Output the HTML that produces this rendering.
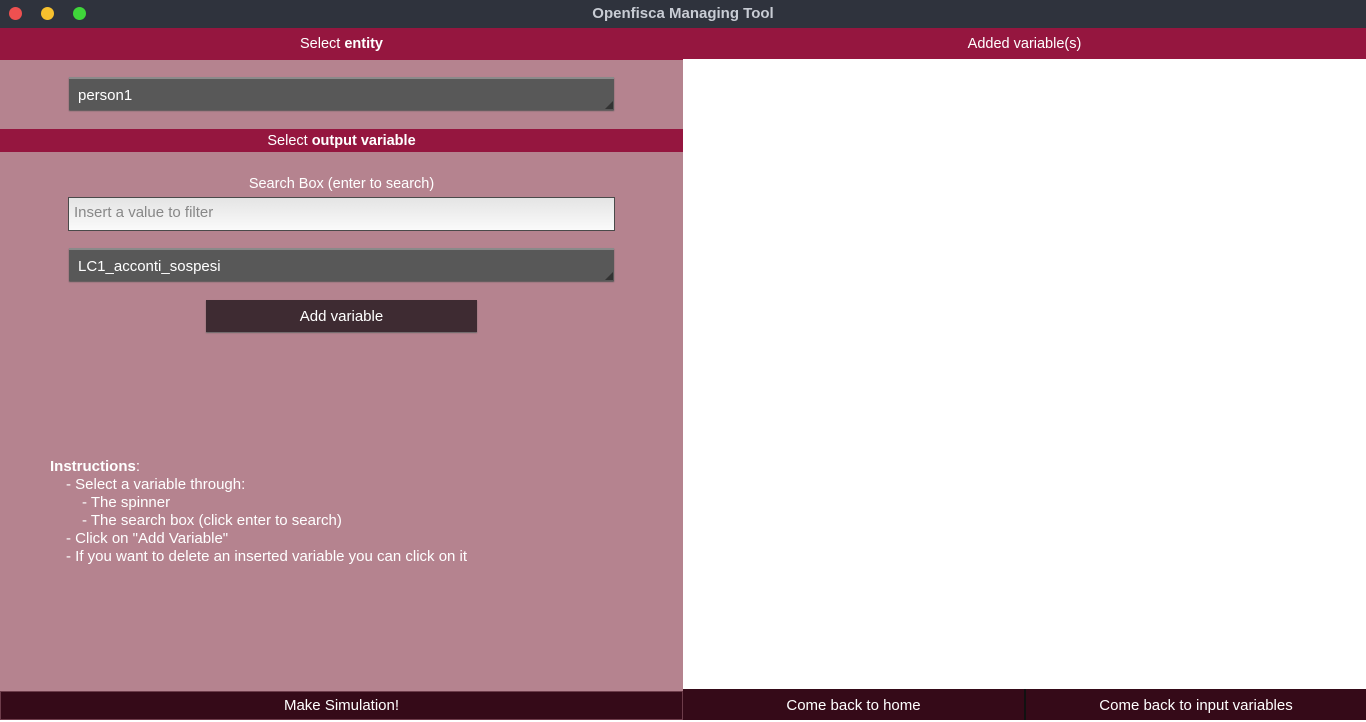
<!DOCTYPE html>
<html><head><style>
*{margin:0;padding:0;box-sizing:border-box}
body{width:1366px;height:720px;overflow:hidden;font-family:"Liberation Sans",sans-serif;font-size:14.5px;color:#fff;background:#fff;position:relative}
.abs{position:absolute}
.title{left:0;top:0;width:1366px;height:28px;background:#2f333d;color:#c8ccd4;font-weight:bold;text-align:center;line-height:28px;font-size:15px}
.dot{width:13px;height:13px;border-radius:50%;top:7px}
.hdr{background:#95163f;text-align:center}
.left{left:0;top:60px;width:683px;height:631px;background:#b5838f}
.combo{left:69px;width:545px;height:33px;background:#585858;border-top:2px solid #8a8a8a;box-shadow:0 1px 1px #555;padding-left:9px;line-height:33px;font-size:15px}
.combo:after{content:"";position:absolute;right:1px;bottom:1px;border-left:8px solid transparent;border-bottom:8px solid #333}
.btn{background:#350a18;text-align:center;line-height:31px;font-size:15px}
</style></head><body>
<div class="abs title">Openfisca Managing Tool</div>
<div class="abs dot" style="left:9px;background:#ee5050"></div>
<div class="abs dot" style="left:41px;background:#f7c12e"></div>
<div class="abs dot" style="left:73px;background:#3fd63a"></div>

<div class="abs hdr" style="left:0;top:28px;width:683px;height:32px;line-height:33px">Select <b>entity</b></div>
<div class="abs hdr" style="left:683px;top:28px;width:683px;height:31px;line-height:32px">Added variable(s)</div>
<div class="abs left"></div>
<div class="abs combo" style="top:77px">person1</div>
<div class="abs hdr" style="left:0;top:129px;width:683px;height:23px;line-height:24px">Select <b>output variable</b></div>
<div class="abs" style="left:0;top:176px;width:683px;text-align:center">Search Box (enter to search)</div>
<div class="abs" style="left:68px;top:197px;width:547px;height:34px;border:1px solid #4a4a4a;background:linear-gradient(#e4e4e4,#fafafa);color:#888;padding-left:5px;line-height:30px;font-size:15px">Insert a value to filter</div>
<div class="abs combo" style="top:248px">LC1_acconti_sospesi</div>
<div class="abs" style="left:206px;top:300px;width:271px;height:32px;background:#3e2b32;text-align:center;line-height:34px;box-shadow:0 1px 1px #666;font-size:15px">Add variable</div>

<div class="abs" style="left:50px;top:458px;line-height:18px;font-size:15px">
<b>Instructions</b>:<br>
<span style="padding-left:16px">- Select a variable through:</span><br>
<span style="padding-left:32px">- The spinner</span><br>
<span style="padding-left:32px">- The search box (click enter to search)</span><br>
<span style="padding-left:16px">- Click on "Add Variable"</span><br>
<span style="padding-left:16px">- If you want to delete an inserted variable you can click on it</span>
</div>

<div class="abs btn" style="left:0;top:691px;width:683px;height:29px;border:1px solid #6d3c4a;line-height:28px">Make Simulation!</div>
<div class="abs btn" style="left:683px;top:689px;width:341px;height:31px;line-height:33px">Come back to home</div>
<div class="abs btn" style="left:1026px;top:689px;width:340px;height:31px;line-height:33px">Come back to input variables</div>
<div class="abs" style="left:1024px;top:689px;width:2px;height:31px;background:#111"></div>
</body></html>
